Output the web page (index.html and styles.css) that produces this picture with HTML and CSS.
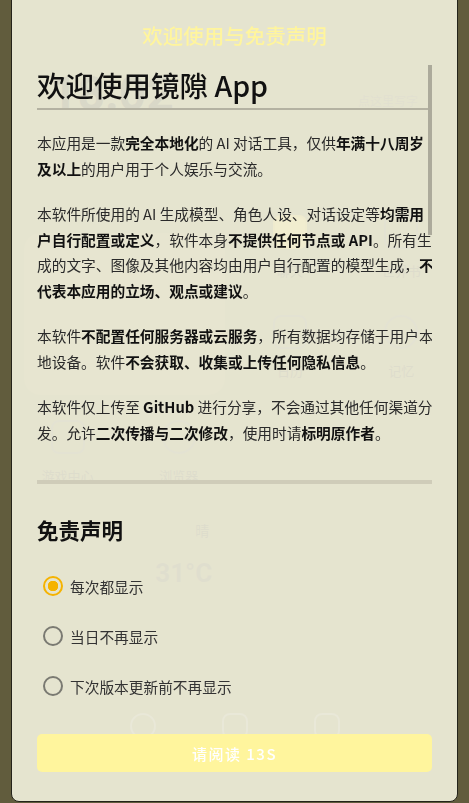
FILE: index.html
```html
<!DOCTYPE html>
<html lang="zh-CN">
<head>
  <meta charset="utf-8">
  <title>镜隙</title>
  <meta name="viewport" content="width=device-width, initial-scale=1.0">
  <link rel="stylesheet" href="styles.css">
</head>
<body>
  <!-- home screen, seen faintly through the dialog -->
  <div class="home">
    <div class="clock">18:02</div>
    <div class="note">点这里写字</div>
    <div class="widget"></div>
    <div class="app app-chat"><span class="app-icon filled"></span>聊天</div>
    <div class="app app-book"><span class="app-icon"></span>世界书</div>
    <div class="app app-cal"><span class="app-icon"></span>日历</div>
    <div class="app app-mem"><span class="app-icon round"></span>记忆</div>
    <div class="app app-game"><span class="app-icon"></span>游戏中心</div>
    <div class="app app-web"><span class="app-icon round"></span>浏览器</div>
    <div class="weather">
      <span class="sky">晴</span>
      <span class="temp">31°C</span>
    </div>
    <div class="dock">
      <span class="app-icon round"></span>
      <span class="app-icon"></span>
      <span class="app-icon"></span>
    </div>
  </div>

  <div class="dialog">
    <h2 class="dialog-title">欢迎使用与免责声明</h2>

    <div class="notice">
      <div class="notice-body">
        <h1>欢迎使用镜隙 App</h1>
        <p>本应用是一款<b>完全本地化</b>的 AI 对话工具，仅供<b>年满十八周岁及以上</b>的用户用于个人娱乐与交流。</p>
        <p>本软件所使用的 AI 生成模型、角色人设、对话设定等<b>均需用户自行配置或定义</b>，软件本身<b>不提供任何节点或 API</b>。所有生成的文字、图像及其他内容均由用户自行配置的模型生成，<b>不代表本应用的立场、观点或建议</b>。</p>
        <p>本软件<b>不配置任何服务器或云服务</b>，所有数据均存储于用户本地设备。软件<b>不会获取、收集或上传任何隐私信息</b>。</p>
        <p>本软件仅上传至 <b>GitHub</b> 进行分享，不会通过其他任何渠道分发。允许<b>二次传播与二次修改</b>，使用时请<b>标明原作者</b>。</p>
      </div>
      <span class="thumb"></span>
    </div>

    <h3 class="section-title">免责声明</h3>
    <div class="options">
      <label class="option"><input type="radio" name="show" checked>每次都显示</label>
      <label class="option"><input type="radio" name="show">当日不再显示</label>
      <label class="option"><input type="radio" name="show">下次版本更新前不再显示</label>
    </div>

    <button class="read-btn" disabled>请阅读 13S</button>
  </div>
</body>
</html>
```

FILE: styles.css
```css
* {
  box-sizing: border-box;
}

body {
  margin: 0;
  height: 100vh;
  overflow: hidden;
  background-color: #615c3d;
  font-family: "Noto Sans CJK SC", sans-serif;
}

/* Home screen behind the dialog */
.home {
  height: 100vh;
  padding: 0 12px;
  display: grid;
  grid-template-columns: repeat(4, 1fr);
  grid-template-rows: 215px 100px 100px 90px 1fr 110px;
  color: #2a2a2a;
}

.clock {
  grid-column: 1 / 4;
  grid-row: 1;
  align-self: start;
  margin: 66px 0 0 38px;
  font-family: Roboto, sans-serif;
  font-size: 48px;
  font-weight: bold;
  line-height: 56px;
  color: #111;
}

.note {
  grid-column: 4;
  grid-row: 1;
  justify-self: end;
  margin: 92px 39px 0 0;
  font-size: 12px;
  line-height: 18px;
  color: #444;
}

.widget {
  grid-column: 1 / 3;
  grid-row: 2 / 4;
  margin: 18px 10px 20px 12px;
  border-radius: 16px;
  background-color: #6a6543;
}

.app {
  display: flex;
  flex-direction: column;
  align-items: center;
  gap: 12px;
  font-size: 13px;
  line-height: 20px;
}

.app-chat { grid-column: 3; grid-row: 2; }
.app-book { grid-column: 4; grid-row: 2; }
.app-cal { grid-column: 3; grid-row: 3; }
.app-mem { grid-column: 4; grid-row: 3; }
.app-game { grid-column: 1; grid-row: 4; padding-top: 5px; }
.app-web { grid-column: 2; grid-row: 4; padding-top: 5px; }

.app-icon {
  display: block;
  width: 34px;
  height: 34px;
  border: 2px solid #555;
  border-radius: 8px;
}

.app-icon.round {
  border-radius: 50%;
}

.app-icon.filled {
  border-color: #a08a3a;
  background-color: #b09a40;
}

.weather {
  grid-column: 2;
  grid-row: 5;
  display: flex;
  flex-direction: column;
  padding: 15px 0 0 32px;
}

.sky {
  margin-left: 40px;
  font-size: 14px;
  line-height: 20px;
}

.temp {
  margin-top: 17px;
  font-family: Roboto, sans-serif;
  font-size: 26px;
  font-weight: bold;
  line-height: 32px;
  color: #3a3a3a;
}

.dock {
  grid-column: 1 / 5;
  grid-row: 6;
  display: flex;
  justify-content: center;
  align-items: flex-start;
  gap: 66px;
  padding-top: 20px;
}

.dock .app-icon {
  width: 26px;
  height: 26px;
  border-color: #777;
}

/* Dialog */
.dialog {
  position: fixed;
  top: -12px;
  left: 11px;
  right: 11px;
  padding: 32px 25px 29px;
  border: 1px solid #24231a;
  border-radius: 8px;
  background-color: rgba(253, 251, 233, 0.85);
}

.dialog-title {
  margin: 0;
  text-align: center;
  font-size: 20.5px;
  font-weight: 500;
  line-height: 28px;
  color: #fff59d;
}

.notice {
  position: relative;
  height: 419px;
  margin-top: 16px;
  border-bottom: 4px solid #cfccb9;
}

.notice-body {
  height: 100%;
  overflow-y: auto;
  scrollbar-width: none;
}

.notice-body::-webkit-scrollbar {
  display: none;
}

.notice h1 {
  margin: 0;
  padding: 2px 0 5px;
  border-bottom: 2px solid #b4b2a2;
  font-size: 28.5px;
  font-weight: 500;
  line-height: 36px;
  color: #111;
}

.notice p {
  margin: 20px -6px 0 0;
  font-size: 14.7px;
  line-height: 25.5px;
  color: #2a2a2a;
}

.notice b {
  font-weight: bold;
  color: #111;
}

.thumb {
  position: absolute;
  top: 0;
  right: 0;
  width: 4px;
  height: 170px;
  background-color: #acaa9b;
}

.section-title {
  margin: 31px 0 0;
  font-size: 21.5px;
  font-weight: bold;
  line-height: 30px;
  color: #111;
}

.options {
  margin-top: 16px;
}

.option {
  display: flex;
  align-items: center;
  gap: 7px;
  height: 50px;
  padding-left: 6px;
  font-size: 14.7px;
  color: #333;
}

.option input {
  appearance: none;
  width: 20px;
  height: 20px;
  margin: 0;
  border: 2px solid #7a7a72;
  border-radius: 50%;
}

.option input:checked {
  border-color: #f5b301;
  background: radial-gradient(circle, #f5b301 0 5px, transparent 5.5px);
}

.read-btn {
  display: block;
  width: 100%;
  height: 38px;
  margin-top: 23px;
  border: none;
  border-radius: 5px;
  background-color: #fff59d;
  color: #fff;
  font-family: inherit;
  font-size: 15px;
  font-weight: 500;
  letter-spacing: 1.5px;
}
```
